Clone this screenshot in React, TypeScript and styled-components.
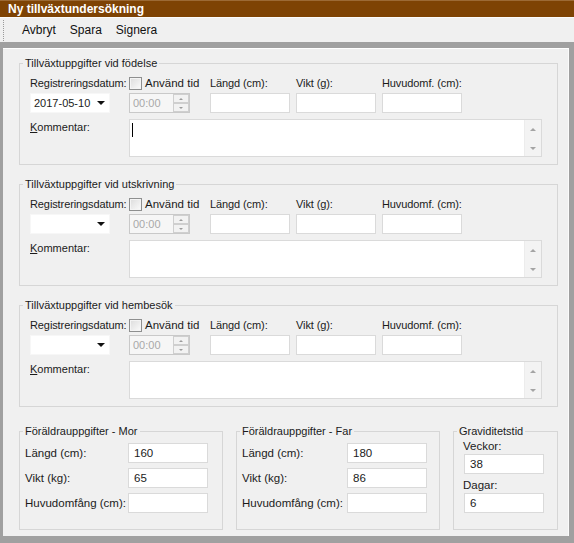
import React from "react";
import styled, { createGlobalStyle } from "styled-components";

const GlobalStyle = createGlobalStyle`
  body {
    margin: 0;
    background: #f0f0f0;
    font-family: "Liberation Sans", Arial, sans-serif;
  }
`;

const Window = styled.div`
  width: 574px;
  height: 543px;
  display: flex;
  flex-direction: column;
  overflow: hidden;
  font-size: 11px;
  color: #1b1b1b;
`;

const TitleBar = styled.div`
  height: 16px;
  flex: none;
  display: flex;
  align-items: center;
  padding-left: 8px;
  background: #7e4304;
  border-top: 1px solid #9c6a35;
  color: #fff;
  font-size: 12px;
  font-weight: bold;
`;

const Toolbar = styled.div`
  height: 24px;
  flex: none;
  display: flex;
  align-items: center;
  padding-left: 3px;
  background: #f0f0f0;
  border-top: 1px solid #fbfbfb;
`;

const Grip = styled.span`
  height: 21px;
  border-left: 1px dotted #9a9a9a;
  margin-right: 11px;
`;

const ToolButton = styled.button`
  font: inherit;
  font-size: 12px;
  color: #111;
  background: none;
  border: 0;
  padding: 0 7px;
`;

const Frame = styled.div`
  flex: 1;
  display: flex;
  background: #a0a0a0;
  padding: 6px 5px 7px 3px;
`;

const Panel = styled.div`
  flex: 1;
  display: flex;
  flex-direction: column;
  gap: 12px;
  background: #f0f0f0;
  border-top: 1px solid #fff;
  border-right: 1px solid #fbfbfb;
  padding: 7px 10px 0 16px;
`;

const Group = styled.fieldset<{ width?: number }>`
  margin: 0;
  padding: 0;
  min-width: 0;
  border: 1px solid #d6d6d6;
  width: ${(p) => (p.width ? `${p.width}px` : "auto")};
  box-sizing: border-box;
`;

const GroupTitle = styled.legend`
  margin-left: 3px;
  padding: 0 2px;
  line-height: 14px;
  font-size: 11px;
`;

const MeasureBody = styled.div`
  display: grid;
  grid-template-columns: 99px 81px 86px 86px 1fr;
  grid-template-rows: 16px 20px auto;
  row-gap: 1px;
  padding: 6px 10px 7px 10px;
`;

const FieldLabel = styled.span`
  line-height: 14px;
  letter-spacing: -0.1px;
  white-space: nowrap;
`;

const CheckLabel = styled.label`
  display: flex;
  align-items: flex-start;
  gap: 3px;
  font-size: 11.5px;
  line-height: 15px;
  white-space: nowrap;
`;

const Checkbox = styled.span`
  width: 11px;
  height: 11px;
  margin-top: 1px;
  border: 1px solid #8e8f8f;
  background: linear-gradient(135deg, #dcdcdc, #fbfbfb);
  box-shadow: inset 0 0 0 1px #f4f4f4;
`;

const DateBox = styled.div`
  width: 80px;
  height: 20px;
  box-sizing: border-box;
  display: flex;
  align-items: center;
  padding: 0 4px 0 3px;
  background: #fff;
  border: 1px solid #f7f7f7;
  font-size: 11px;
`;

const DropArrow = styled.span`
  width: 0;
  height: 0;
  border-left: 4px solid transparent;
  border-right: 4px solid transparent;
  border-top: 4px solid #111;
  margin-left: auto;
`;

const TimeBox = styled.div`
  width: 61px;
  height: 20px;
  box-sizing: border-box;
  display: flex;
  align-items: center;
  padding-left: 3px;
  background: #f6f6f6;
  border: 1px solid #c9c9c9;
  color: #a9a9a9;
  font-size: 11px;
`;

const Spinner = styled.div`
  margin-left: auto;
  width: 16px;
  height: 18px;
  display: flex;
  flex-direction: column;
`;

const SpinButton = styled.span<{ down?: boolean }>`
  flex: 1;
  display: flex;
  align-items: center;
  justify-content: center;
  border: 1px solid #cfcfcf;
  background: #f2f2f2;
  &::after {
    content: "";
    border-left: 2px solid transparent;
    border-right: 2px solid transparent;
    ${(p) => (p.down ? "border-top: 2px solid #9b9b9b;" : "border-bottom: 2px solid #9b9b9b;")}
  }
`;

const TextInput = styled.div<{ width?: number }>`
  width: ${(p) => p.width ?? 80}px;
  height: 20px;
  box-sizing: border-box;
  display: flex;
  align-items: center;
  padding-left: 5px;
  background: #fff;
  border: 1px solid #dadada;
  font-size: 11.5px;
`;

const CommentLabel = styled.span`
  line-height: 14px;
  margin-top: 6px;
  grid-column: 1;
  & u {
    text-decoration: underline;
  }
`;

const CommentBox = styled.div`
  grid-column: 2 / -1;
  width: 413px;
  height: 38px;
  margin-top: 5px;
  box-sizing: border-box;
  display: flex;
  background: #fff;
  border: 1px solid #dadada;
`;

const CommentText = styled.div`
  flex: 1;
  padding: 3px 2px;
`;

const Caret = styled.span`
  display: block;
  width: 1px;
  height: 14px;
  background: #000;
`;

const ScrollTrack = styled.div`
  width: 16px;
  display: flex;
  flex-direction: column;
  justify-content: space-between;
  align-items: center;
  padding: 8px 0 6px;
  background: #f3f3f3;
  border-left: 1px solid #ececec;
`;

const ScrollArrow = styled.span<{ down?: boolean }>`
  width: 0;
  height: 0;
  border-left: 3px solid transparent;
  border-right: 3px solid transparent;
  ${(p) => (p.down ? "border-top: 3px solid #a4a4a4;" : "border-bottom: 3px solid #a4a4a4;")}
`;

const BottomRow = styled.div`
  display: flex;
  gap: 13px;
  margin-top: 5px;
`;

const ParentBody = styled.div<{ labelWidth: number }>`
  display: grid;
  grid-template-columns: ${(p) => p.labelWidth}px 80px;
  row-gap: 5px;
  align-items: center;
  padding: 5px 14px 12px 5px;
  font-size: 11.5px;
  white-space: nowrap;
`;

const StackBody = styled.div`
  display: flex;
  flex-direction: column;
  align-items: flex-start;
  padding: 1px 0 12px 10px;
  font-size: 11.5px;
`;

const StackLabel = styled.span`
  line-height: 14px;
  margin: 0 0 1px -1px;
  & + div {
    margin-bottom: 4px;
  }
`;

type MeasureProps = { title: string; date?: string; focused?: boolean };

const MeasureGroup = ({ title, date, focused }: MeasureProps) => (
  <Group>
    <GroupTitle>{title}</GroupTitle>
    <MeasureBody>
      <FieldLabel>Registreringsdatum:</FieldLabel>
      <CheckLabel>
        <Checkbox />
        Använd tid
      </CheckLabel>
      <FieldLabel>Längd (cm):</FieldLabel>
      <FieldLabel>Vikt (g):</FieldLabel>
      <FieldLabel>Huvudomf. (cm):</FieldLabel>

      <DateBox>
        {date}
        <DropArrow />
      </DateBox>
      <TimeBox>
        00:00
        <Spinner>
          <SpinButton />
          <SpinButton down />
        </Spinner>
      </TimeBox>
      <TextInput />
      <TextInput />
      <TextInput />

      <CommentLabel>
        <u>K</u>ommentar:
      </CommentLabel>
      <CommentBox>
        <CommentText>{focused && <Caret />}</CommentText>
        <ScrollTrack>
          <ScrollArrow />
          <ScrollArrow down />
        </ScrollTrack>
      </CommentBox>
    </MeasureBody>
  </Group>
);

type ParentProps = { title: string; length: string; weight: string; labelWidth: number };

const ParentGroup = ({ title, length, weight, labelWidth }: ParentProps) => (
  <Group width={204}>
    <GroupTitle>{title}</GroupTitle>
    <ParentBody labelWidth={labelWidth}>
      <span>Längd (cm):</span>
      <TextInput>{length}</TextInput>
      <span>Vikt (kg):</span>
      <TextInput>{weight}</TextInput>
      <span>Huvudomfång (cm):</span>
      <TextInput />
    </ParentBody>
  </Group>
);

const App: React.FC = () => {
  return (
    <>
      <GlobalStyle />
      <Window>
        <TitleBar>Ny tillväxtundersökning</TitleBar>
        <Toolbar>
          <Grip />
          <ToolButton>Avbryt</ToolButton>
          <ToolButton>Spara</ToolButton>
          <ToolButton>Signera</ToolButton>
        </Toolbar>
        <Frame>
          <Panel>
            <MeasureGroup title="Tillväxtuppgifter vid födelse" date="2017-05-10" focused />
            <MeasureGroup title="Tillväxtuppgifter vid utskrivning" />
            <MeasureGroup title="Tillväxtuppgifter vid hembesök" />
            <BottomRow>
              <ParentGroup title="Föräldrauppgifter - Mor" length="160" weight="65" labelWidth={103} />
              <ParentGroup title="Föräldrauppgifter - Far" length="180" weight="86" labelWidth={105} />
              <Group width={105}>
                <GroupTitle>Graviditetstid</GroupTitle>
                <StackBody>
                  <StackLabel>Veckor:</StackLabel>
                  <TextInput>38</TextInput>
                  <StackLabel>Dagar:</StackLabel>
                  <TextInput>6</TextInput>
                </StackBody>
              </Group>
            </BottomRow>
          </Panel>
        </Frame>
      </Window>
    </>
  );
};

export default App;
